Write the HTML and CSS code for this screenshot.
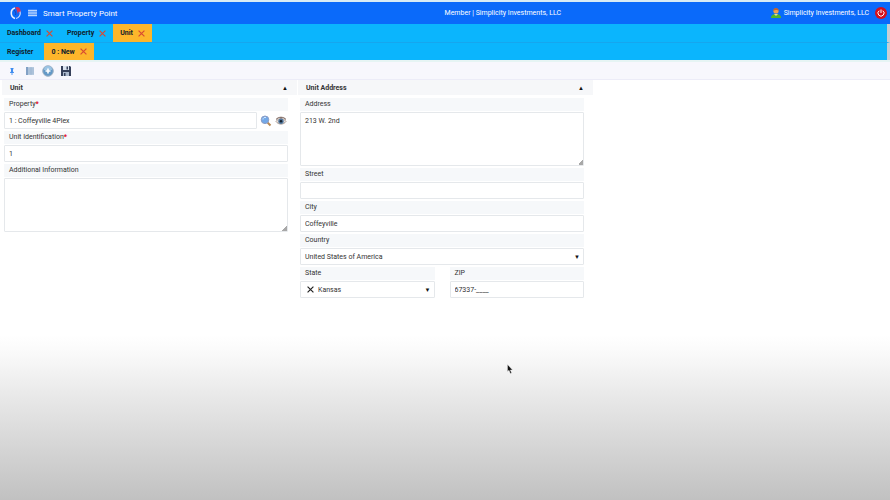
FILE: index.html
```html
<!DOCTYPE html>
<html lang="en">
<head>
    <meta charset="UTF-8">
    <meta name="viewport" content="width=device-width, initial-scale=1.0">
    <title>Smart Property Point</title>
    <link rel="stylesheet" href="styles.css">
</head>
<body>
    <header class="topbar">
        <div class="topbar__brand">
            <svg class="logo" viewBox="0 0 12 14" aria-hidden="true">
                <path d="M5 2C0 3 0 11 5 12.500" fill="none" stroke="#e8efff" stroke-width="1.600"/>
                <path d="M10 5c1 4-1 7-4 7.500" fill="none" stroke="#c9d9ff" stroke-width="1.200"/>
                <path d="M5 1.500c3-1.500 6 0 5.500 4.500L8.500 5.500 8 8C7 6 7.500 4 5 1.500z" fill="#d8305a"/>
                <path d="M4 4c1.500 1 2 3 1.500 5" fill="none" stroke="#1c43b8"/>
            </svg>
            <button class="icon-btn" aria-label="Menu">
                <svg class="menu" viewBox="0 0 10 8"><path d="M0 1h10M0 3h10M0 5h10M0 7h10" stroke="#fff"/></svg>
            </button>
            <span class="topbar__title">Smart Property Point</span>
        </div>
        <div class="topbar__member">Member | Simplicity Investments, LLC</div>
        <div class="topbar__user">
            <svg class="user" viewBox="0 0 12 12" aria-hidden="true">
                <path d="M1 11c0-3 2-4 5-4s5 1 5 4z" fill="#52b52c"/>
                <path d="M4 7l2 2 2-2z" fill="#e8d9a0"/>
                <circle cx="6" cy="4" r="2.600" fill="#f0a050"/>
                <path d="M3.300 4c-.5-4 5.900-4 5.400 0-1-1.500-4-1.500-5.400 0z" fill="#c0642e"/>
            </svg>
            <span>Simplicity Investments, LLC</span>
            <button class="icon-btn" aria-label="Log out">
                <svg class="power" viewBox="0 0 12 12">
                    <circle cx="6" cy="6" r="6" fill="#d5101c"/>
                    <path d="M4.200 3.700a3 3 0 1 0 3.600 0M6 2.500v3.500" fill="none" stroke="#fff"/>
                </svg>
            </button>
        </div>
    </header>

    <nav class="tabs">
        <div class="tab"><a href="#">Dashboard</a><button class="close" aria-label="Close Dashboard"><svg viewBox="0 0 6 6"><path d="M.5.5l5 5M5.500.5l-5 5"/></svg></button></div>
        <div class="tab"><a href="#">Property</a><button class="close" aria-label="Close Property"><svg viewBox="0 0 6 6"><path d="M.5.5l5 5M5.500.5l-5 5"/></svg></button></div>
        <div class="tab tab--active"><a href="#">Unit</a><button class="close" aria-label="Close Unit"><svg viewBox="0 0 6 6"><path d="M.5.5l5 5M5.500.5l-5 5"/></svg></button></div>
    </nav>
    <nav class="tabs tabs--sub">
        <div class="tab"><a href="#">Register</a></div>
        <div class="tab tab--active"><a href="#">0 : New</a><button class="close" aria-label="Close New"><svg viewBox="0 0 6 6"><path d="M.5.5l5 5M5.500.5l-5 5"/></svg></button></div>
    </nav>

    <div class="toolbar">
        <button class="icon-btn" aria-label="Pin">
            <svg viewBox="0 0 12 12"><path d="M4.500 3h3v1L7 4.500v2l1 1v.5H4v-.5l1-1v-2L4.500 4z" fill="#3f8df0"/><path d="M6 8v2" stroke="#5d9cf0"/></svg>
        </button>
        <button class="icon-btn" aria-label="List">
            <svg viewBox="0 0 12 12"><path d="M2 2h8v8H2z" fill="#b7cadf"/><path d="M2 2h2v8H2z" fill="#7f9fc4"/><path d="M2 4h8M2 6h8M2 8h8M7 2v8" stroke="#8ea9c8" stroke-width=".5"/></svg>
        </button>
        <button class="icon-btn" aria-label="Add">
            <svg viewBox="0 0 12 12"><circle cx="6" cy="6" r="5.300" fill="#6399c7" stroke="#a3b4c5"/><path d="M2 5a4 4 0 0 1 8 0z" fill="#9bc4e4"/><path d="M6 3.500v5M3.500 6h5" stroke="#fff" stroke-width="1.600"/></svg>
        </button>
        <button class="icon-btn" aria-label="Save">
            <svg viewBox="0 0 12 12"><path d="M1 1h9l1 1v9H1z" fill="#35405a"/><path d="M3 1h6v4H3z" fill="#dbe4f0"/><path d="M6.500 1.500h1.500v3H6.500z" fill="#35405a"/><path d="M3 7h6v4H3z" fill="#aab8cc"/><path d="M4 8h1.500v3H4z" fill="#35405a"/></svg>
        </button>
    </div>

    <main class="panels">
        <section class="panel">
            <div class="panel__header">
                <h2>Unit</h2>
                <button class="panel__toggle" aria-label="Collapse Unit">▲</button>
            </div>
            <div class="panel__body">
                <div class="field">
                    <label for="property">Property<span class="required">*</span></label>
                    <div class="lookup">
                        <input type="text" id="property" value="1 : Coffeyville 4Plex">
                        <button class="icon-btn" aria-label="Search property">
                            <svg viewBox="0 0 12 12"><path d="M7.500 7.500l3 3" stroke="#b98a55" stroke-width="2"/><circle cx="5" cy="4.800" r="3.800" fill="#72a8e8" stroke="#8c9dc5"/><path d="M3 4.500a2 2 0 0 1 3-1.800" fill="none" stroke="#d5eaff"/></svg>
                        </button>
                        <button class="icon-btn" aria-label="View property">
                            <svg viewBox="0 0 12 12"><path d="M1 6.500c2.500-4 7.500-4 10 0-2.500 3.500-7.500 3.500-10 0z" fill="#e8e2de" stroke="#9b8880" stroke-width=".8"/><circle cx="6" cy="6.200" r="2.700" fill="#51779d"/><circle cx="6" cy="6.200" r="1.200" fill="#17232f"/><path d="M1 4.500c2.500-3 7.500-3 10 0" fill="none" stroke="#6b5148"/></svg>
                        </button>
                    </div>
                </div>
                <div class="field">
                    <label for="unit-id">Unit Identification<span class="required">*</span></label>
                    <input type="text" id="unit-id" value="1">
                </div>
                <div class="field">
                    <label for="info">Additional Information</label>
                    <textarea id="info"></textarea>
                </div>
            </div>
        </section>

        <section class="panel">
            <div class="panel__header">
                <h2>Unit Address</h2>
                <button class="panel__toggle" aria-label="Collapse Unit Address">▲</button>
            </div>
            <div class="panel__body">
                <div class="field">
                    <label for="address">Address</label>
                    <textarea id="address">213 W. 2nd</textarea>
                </div>
                <div class="field">
                    <label for="street">Street</label>
                    <input type="text" id="street">
                </div>
                <div class="field">
                    <label for="city">City</label>
                    <input type="text" id="city" value="Coffeyville">
                </div>
                <div class="field">
                    <label for="country">Country</label>
                    <div class="select">
                        <select id="country"><option>United States of America</option></select>
                    </div>
                </div>
                <div class="field-row">
                    <div class="field">
                        <label for="state">State</label>
                        <div class="select select--clearable">
                            <select id="state"><option>Kansas</option></select>
                            <button class="clear" aria-label="Clear state"><svg viewBox="0 0 6 6"><path d="M.5.5l5 5M5.500.5l-5 5"/></svg></button>
                        </div>
                    </div>
                    <div class="field">
                        <label for="zip">ZIP</label>
                        <input type="text" id="zip" value="67337-____">
                    </div>
                </div>
            </div>
        </section>
    </main>

    <svg class="pointer" viewBox="0 0 6 10" aria-hidden="true">
        <path d="M.5.5v7l1.500-1.300L3.300 9.500l1.300-.6L3.300 6h2.200z" fill="#111" stroke="#eee" stroke-width=".4"/>
    </svg>
</body>
</html>
```

FILE: styles.css
```css
* {
    box-sizing: border-box;
}
body {
    margin: 0;
    min-height: 100vh;
    font-family: Roboto, "Liberation Sans", sans-serif;
    font-size: 7px;
    color: #333;
    background: linear-gradient(#fff 67%, #f9f9f9 71%, #ebebeb 78%, #c1c1c1 100%);
}
button,
input,
select,
textarea {
    font: inherit;
    color: inherit;
    margin: 0;
}
button {
    padding: 0;
    border: none;
    background: none;
    cursor: pointer;
}
a {
    color: inherit;
    text-decoration: none;
}
svg {
    display: block;
}
.icon-btn svg {
    width: 12px;
    height: 12px;
}

/* top bar */
.topbar {
    display: grid;
    grid-template-columns: 4fr auto 3fr;
    align-items: center;
    height: 24px;
    padding: 0 3px 0 10px;
    border-top: 2px solid #d8ecf5;
    background: #0a6afa;
    color: #fff;
}
.topbar__brand {
    display: flex;
    align-items: center;
    gap: 6px;
}
.topbar__title {
    font-size: 8px;
}
.topbar__user {
    display: flex;
    align-items: center;
    justify-content: flex-end;
    gap: 2px;
}
.topbar__user .icon-btn {
    margin-left: 4px;
}
.logo {
    width: 12px;
    height: 14px;
}
.icon-btn .menu {
    width: 9px;
    height: 8px;
}
.user {
    width: 12px;
    height: 12px;
}

/* tabs */
.tabs {
    display: flex;
    height: 18px;
    background: #0bb5fd;
    border-right: 3px solid #c8ced3;
    color: #10202c;
    font-weight: 700;
}
.tabs--sub {
    border-top: 1px solid #16a6ee;
}
.tab {
    display: flex;
    align-items: center;
    gap: 5px;
    padding: 0 7px;
}
.tab--active {
    background: #fdb62b;
}
.tabs--sub .tab:first-child {
    padding-right: 11px;
}
.close svg,
.clear svg {
    width: 7px;
    height: 7px;
    fill: none;
    stroke: #d84a32;
}

/* toolbar */
.toolbar {
    display: flex;
    align-items: center;
    gap: 6px;
    height: 20px;
    padding: 0 6px;
    background: #f7f7fd;
    border-top: 2px solid #e6f4f4;
    border-bottom: 1px solid #ececf8;
}

/* form panels */
.panels {
    display: grid;
    grid-template-columns: 1fr 1fr 1fr;
    padding-left: 2px;
}
.panel__header {
    display: flex;
    align-items: center;
    justify-content: space-between;
    height: 15px;
    padding: 0 9px 0 8px;
    margin-right: 1px;
    background: #f6f7f9;
}
.panel__header h2 {
    margin: 0;
    font-size: 7px;
    font-weight: 700;
}
.panel__toggle {
    font-size: 6px;
    color: #111;
}
.panel__body {
    display: flex;
    flex-direction: column;
    gap: 2px;
    padding: 3px 10px 0 2px;
}
.field label {
    display: block;
    height: 13px;
    margin-bottom: 1px;
    padding: 0 5px;
    line-height: 13px;
    background: #f6f8fa;
}
.required {
    color: #e00016;
    font-weight: 700;
}
input,
select,
textarea {
    display: block;
    width: 100%;
    height: 17px;
    padding: 0 4px;
    border: 1px solid #e5e8eb;
    border-radius: 1px;
    background: #fff;
}
input:focus,
select:focus,
textarea:focus {
    outline: none;
    border-color: #0bb5fd;
}
textarea {
    height: 54px;
    padding: 4px;
    line-height: 8px;
    resize: vertical;
}
textarea::-webkit-resizer {
    background: linear-gradient(135deg, transparent 50%, #a8a8a8 50%) right bottom / 5px 5px no-repeat;
}
.lookup {
    display: flex;
    align-items: center;
    gap: 3px;
    padding-right: 1px;
}
.lookup input {
    flex: 1;
}
.field-row {
    display: grid;
    grid-template-columns: 1fr 1fr;
    gap: 15px;
}
.select {
    position: relative;
}
.select select {
    appearance: none;
}
.select::after {
    content: "▼";
    position: absolute;
    right: 4px;
    top: 0;
    line-height: 17px;
    font-size: 6px;
    color: #111;
    pointer-events: none;
}
.select--clearable select {
    padding-left: 17px;
}
.clear {
    position: absolute;
    left: 7px;
    top: 5px;
}
.clear svg {
    stroke: #222;
}

.pointer {
    position: absolute;
    left: 507px;
    top: 364px;
    width: 6px;
    height: 10px;
}
```
